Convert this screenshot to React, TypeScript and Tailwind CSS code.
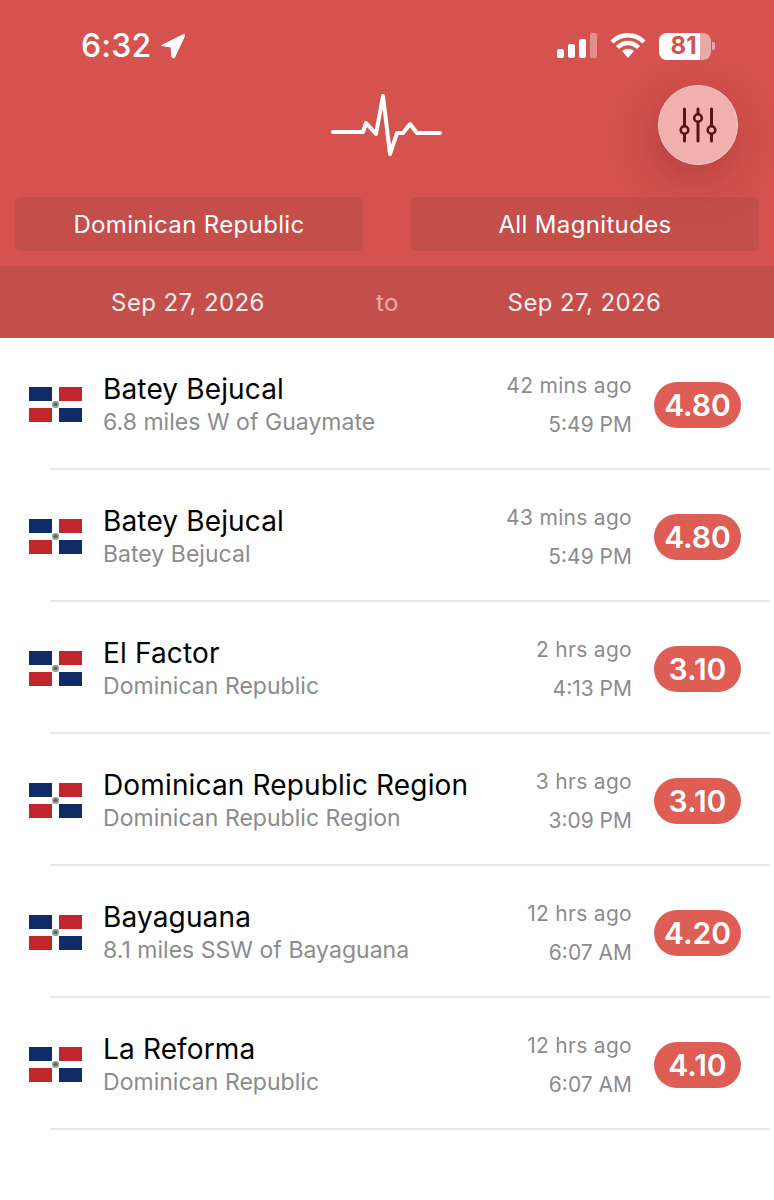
const font = { fontFamily: 'Inter, "Liberation Sans", sans-serif' };

const rows = [
  { t: "Batey Bejucal", s: "6.8 miles W of Guaymate", a: "42 mins ago", c: "5:49 PM", m: "4.80" },
  { t: "Batey Bejucal", s: "Batey Bejucal", a: "43 mins ago", c: "5:49 PM", m: "4.80" },
  { t: "El Factor", s: "Dominican Republic", a: "2 hrs ago", c: "4:13 PM", m: "3.10" },
  { t: "Dominican Republic Region", s: "Dominican Republic Region", a: "3 hrs ago", c: "3:09 PM", m: "3.10" },
  { t: "Bayaguana", s: "8.1 miles SSW of Bayaguana", a: "12 hrs ago", c: "6:07 AM", m: "4.20" },
  { t: "La Reforma", s: "Dominican Republic", a: "12 hrs ago", c: "6:07 AM", m: "4.10" },
];

function Flag() {
  return (
    <svg width="55" height="37" viewBox="0 0 55 37" className="shrink-0">
      <rect x="1" y="1" width="23" height="14" fill="#102c68" />
      <rect x="31" y="1" width="23" height="14" fill="#c0272d" />
      <rect x="1" y="22" width="23" height="14" fill="#c0272d" />
      <rect x="31" y="22" width="23" height="14" fill="#102c68" />
      <rect x="24" y="15" width="7" height="7" rx="2.500" fill="#a3a5a3" />
      <rect x="25.500" y="16.500" width="4" height="3.500" rx="1.500" fill="#5f6662" />
    </svg>
  );
}

function Row({ r }: { r: (typeof rows)[number] }) {
  return (
    <div className="h-[132px] flex flex-col">
      <div className="flex-1 flex items-center pl-[28px] pr-[33px] pt-[3px]">
        <Flag />
        <div className="ml-[20px] flex-1 min-w-0">
          <div className="text-[28px] leading-[34px] text-black tracking-[0.15px] whitespace-nowrap">{r.t}</div>
          <div className="text-[23px] leading-[32px] text-[#8b8b90] tracking-[0.03px] whitespace-nowrap">{r.s}</div>
        </div>
        <div className="text-right text-[21px] text-[#8b8b90] leading-[39px] mr-[22px] whitespace-nowrap">
          <div className="tracking-[0.3px]">{r.a}</div>
          <div>{r.c}</div>
        </div>
        <div className="w-[87px] h-[46px] rounded-[23px] bg-[#de5d55] text-white font-semibold text-[30px] flex items-center justify-center pt-[2px]">
          {r.m}
        </div>
      </div>
      <div className="h-[2px] ml-[50px] mr-[4px] bg-[#e6e7ee]" />
    </div>
  );
}

export default function App() {
  return (
    <div className="w-[774px] h-[1200px] bg-white overflow-hidden" style={font}>
      <div className="bg-[#d5524e] h-[338px] flex flex-col">
        <div className="h-[85px] flex items-center pl-[81px] pr-[59px] pt-[7px] text-white">
          <span className="text-[32px] font-medium leading-none tracking-[0.2px]">6:32</span>
          <svg width="26" height="26" viewBox="0 0 26 26" className="ml-[9px]">
            <path d="M1.500 12.500 L23.500 1.500 Q25 1 24.500 3 L14.500 24.500 Q13 26 12 24 L11 14 Z" fill="white" stroke="white" strokeWidth="1" strokeLinejoin="round" />
          </svg>
          <div className="ml-auto flex items-center">
            <svg width="40" height="26" viewBox="0 0 40 26">
              <rect x="0" y="16" width="7" height="9" rx="2" fill="white" />
              <rect x="11" y="11" width="7" height="14" rx="2" fill="white" />
              <rect x="22" y="6" width="7" height="19" rx="2" fill="white" />
              <rect x="33" y="0" width="7" height="25" rx="2" fill="white" fillOpacity="0.35" />
            </svg>
            <svg width="36" height="26" viewBox="0 0 36 26" className="ml-[13px]">
              <path d="M2 9 C11 0 25 0 34 9 M7.500 14.500 C13.500 8.500 22.500 8.500 28.500 14.500" fill="none" stroke="white" strokeWidth="4.400" />
              <path d="M12 18 C15.500 15 20.500 15 24 18 L18 25 Z" fill="white" />
            </svg>
            <div className="ml-[13px] w-[52px] h-[27px] rounded-[8px] bg-[#e9aaa7] overflow-hidden relative flex items-center">
              <div className="h-full w-[41px] bg-white flex items-center justify-center text-[#d5524e] text-[24px] font-bold leading-none pl-[8px]">81</div>
            </div>
            <div className="ml-[1px] w-[3px] h-[8px] rounded-r-[2px] bg-[#e9aaa7]" />
          </div>
        </div>
        <div className="h-[112px] relative flex justify-center pt-[9px]">
          <svg width="112" height="62" viewBox="0 0 112 62">
            <path d="M2 38 H32 L35 29 L45 40 L52 2 L59 60 L66 39 H72 L79 30 L86 39 H109" fill="none" stroke="white" strokeWidth="4" strokeLinecap="round" strokeLinejoin="round" />
          </svg>
          <div className="absolute right-[36px] top-0 w-[80px] h-[80px] rounded-full bg-[#efb0ae] border border-[#f5cdcb] shadow-[-4px_14px_50px_rgba(90,20,20,0.3)] flex items-center justify-center">
            <svg width="40" height="36" viewBox="0 0 40 36" fill="none" stroke="#5a1414" strokeWidth="3" strokeLinecap="round">
              <path d="M6.500 2 V34 M20 2 V34 M33.500 2 V34" />
              <circle cx="6.500" cy="23" r="3.800" strokeWidth="2.600" fill="#efb0ae" />
              <circle cx="20" cy="11" r="3.800" strokeWidth="2.600" fill="#efb0ae" />
              <circle cx="33.500" cy="23" r="3.800" strokeWidth="2.600" fill="#efb0ae" />
            </svg>
          </div>
        </div>
        <div className="flex gap-[48px] px-[15px] h-[54px] text-white text-[24px] tracking-[0.35px] pb-0">
          <div className="flex-1 rounded-[6px] bg-[#c44e4a] flex items-center justify-center pt-[2px]">Dominican Republic</div>
          <div className="flex-1 rounded-[6px] bg-[#c44e4a] flex items-center justify-center pt-[2px]">All Magnitudes</div>
        </div>
        <div className="mt-[15px] h-[72px] bg-[#c44e4a] flex items-center text-[24px] text-[#fdeeee] tracking-[0.4px] pt-[2px]">
          <div className="w-[376px] text-center">Sep 27, 2026</div>
          <div className="w-[22px] text-center text-[#eeaaa7]">to</div>
          <div className="w-[373px] text-center">Sep 27, 2026</div>
        </div>
      </div>
      <div className="flex flex-col">
        {rows.map((r, i) => (
          <Row key={i} r={r} />
        ))}
      </div>
    </div>
  );
}
